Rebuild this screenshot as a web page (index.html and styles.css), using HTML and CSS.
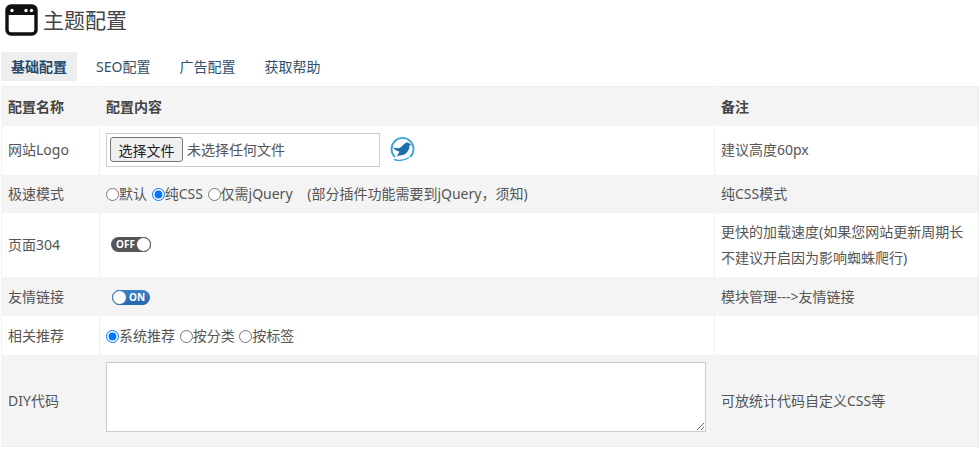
FILE: index.html
```html
<!DOCTYPE html>
<html lang="zh-CN">
  <head>
    <meta charset="utf-8">
    <title>主题配置</title>
    <link rel="stylesheet" href="styles.css">
  </head>
  <body>
    <div class="page-title">
      <svg class="title-icon" viewBox="0 0 33 32" width="33" height="32">
        <rect x="2" y="2" width="29" height="28" rx="4" fill="#fff" stroke="#111" stroke-width="3.4"/>
        <path d="M2 11V6a4 4 0 0 1 4-4h21a4 4 0 0 1 4 4v5z" fill="#111"/>
        <circle cx="7" cy="6.5" r="1.7" fill="#fff"/>
        <circle cx="21" cy="6.5" r="1.7" fill="#fff"/>
        <circle cx="26.5" cy="6.5" r="1.7" fill="#fff"/>
      </svg>
      <h1>主题配置</h1>
    </div>

    <ul class="tabs">
      <li class="active">基础配置</li>
      <li>SEO配置</li>
      <li>广告配置</li>
      <li>获取帮助</li>
    </ul>

    <table class="config">
      <tr class="row-head">
        <th class="col-name">配置名称</th>
        <th class="col-value">配置内容</th>
        <th>备注</th>
      </tr>
      <tr class="row-logo">
        <td>网站Logo</td>
        <td>
          <div class="logo-field">
            <div class="file-box">
              <button type="button" class="file-btn">选择文件</button>
              <span>未选择任何文件</span>
            </div>
            <svg class="logo-bird" viewBox="0 0 26 26" width="26" height="26">
              <path d="M6 21A11 11 0 1 1 21 21" fill="none" stroke="#3aa3d6" stroke-width="1.800"/>
              <path d="M5 23.500c4 1.500 10 1.300 15-2" fill="none" stroke="#3aa3d6" stroke-width="1.400"/>
              <path d="M4 11.500c3 .5 5 1 7 .3 2-1 3.500-3.800 6-5 1.500-.7 3-.2 3.500 1l2.200 1-2.200 .8c0 4.500-2.500 8-6 9.200-2.500.8-4.500.4-6.500 1.700.5-2 2-3.500 2.300-5C7.500 15 5.500 13.500 4 11.500z" fill="#1c6fa8"/>
            </svg>
          </div>
        </td>
        <td>建议高度60px</td>
      </tr>
      <tr class="row-speed">
        <td>极速模式</td>
        <td>
          <label class="radio"><input type="radio" name="speed">默认</label>
          <label class="radio"><input type="radio" name="speed" checked>纯CSS</label>
          <label class="radio"><input type="radio" name="speed">仅需jQuery</label>
          <span class="hint">(部分插件功能需要到jQuery，须知)</span>
        </td>
        <td>纯CSS模式</td>
      </tr>
      <tr class="row-304">
        <td>页面304</td>
        <td><span class="switch off"><span class="switch-label">OFF</span><span class="knob"></span></span></td>
        <td class="note-long">更快的加载速度(如果您网站更新周期长不建议开启因为影响蜘蛛爬行)</td>
      </tr>
      <tr class="row-link">
        <td>友情链接</td>
        <td><span class="switch on"><span class="knob"></span><span class="switch-label">ON</span></span></td>
        <td>模块管理---&gt;友情链接</td>
      </tr>
      <tr class="row-related">
        <td>相关推荐</td>
        <td>
          <label class="radio"><input type="radio" name="related" checked>系统推荐</label>
          <label class="radio"><input type="radio" name="related">按分类</label>
          <label class="radio"><input type="radio" name="related">按标签</label>
        </td>
        <td></td>
      </tr>
      <tr class="row-diy">
        <td>DIY代码</td>
        <td><textarea class="diy-code"></textarea></td>
        <td>可放统计代码自定义CSS等</td>
      </tr>
    </table>
  </body>
</html>
```

FILE: styles.css
```css
body{
  margin:0;
  background-color:#fff;
  color:#555;
  font-family:"Noto Sans","Noto Sans CJK SC",sans-serif;
  font-size:14px;
}
.page-title{
  display:flex;
  align-items:center;
  height:40px;
  padding:0 0 0 5px;
}
.title-icon{
  display:block;
  margin-right:5px;
}
.page-title h1{
  margin:0 0 2px 0;
  font-size:21px;
  font-weight:normal;
  color:#444;
}
.tabs{
  display:flex;
  gap:9px;
  list-style:none;
  margin:12px 0 0 1px;
  padding:0;
  color:#33506b;
}
.tabs li{
  padding:0 10px;
  height:29px;
  line-height:29px;
}
.tabs .active{
  background-color:#eee;
  font-weight:bold;
  color:#25496e;
}
.config{
  border-collapse:collapse;
  table-layout:fixed;
  width:978px;
  margin:5px 0 0 1px;
  border:1px solid #eee;
  line-height:20px;
}
.config th,
.config td{
  padding:0 7px 0 6px;
  text-align:left;
  border-left:1px solid #f0f0f0;
}
.col-name{
  width:84px;
}
.col-value{
  width:601px;
}
.config tr:nth-child(odd){
  background-color:#f4f4f4;
}
.config tr:nth-child(odd) td,
.config tr:nth-child(odd) th{
  border-left-color:#f4f4f4;
}
.row-head{
  height:39px;
}
.config .row-head th{
  padding-top:1px;
  color:#444;
}
.row-logo{
  height:49px;
}
.row-speed{
  height:38px;
}
.row-304{
  height:64px;
}
.row-link{
  height:39px;
}
.row-related{
  height:39px;
}
.row-diy{
  height:92px;
}
.config .row-link td,
.config .row-related td,
.config .row-diy td{
  padding-top:1px;
}
.config .row-diy td{
  padding-top:2px;
}
.config .note-long{
  line-height:26px;
}
.logo-field{
  display:flex;
  align-items:center;
  gap:9px;
}
.file-box{
  display:flex;
  align-items:center;
  box-sizing:border-box;
  width:274px;
  height:34px;
  margin-top:-1px;
  padding-left:3px;
  border:1px solid #ccc;
  background-color:#fff;
}
.file-btn{
  width:73px;
  height:25px;
  margin-right:4px;
  padding:0;
  border:1px solid #767676;
  border-radius:3px;
  background-color:#efefef;
  color:#222;
  font-family:inherit;
  font-size:14px;
}
.logo-bird{
  display:block;
  margin-top:-2px;
}
.radio{
  margin-right:1px;
}
.radio input{
  width:13px;
  height:13px;
  margin:0 0 1px 0;
  vertical-align:middle;
}
.hint{
  margin-left:10px;
}
.switch{
  display:inline-flex;
  align-items:center;
  box-sizing:border-box;
  height:15px;
  border-radius:8px;
  vertical-align:middle;
  color:#fff;
  font-size:10px;
  font-weight:bold;
  line-height:15px;
}
.switch.off{
  width:40px;
  margin:0 0 2px 5px;
  padding-left:5px;
  justify-content:space-between;
  background-color:#555;
}
.switch.on{
  width:38px;
  margin-left:6px;
  gap:2px;
  background:linear-gradient(#3b82c8,#2566ad);
}
.knob{
  box-sizing:border-box;
  width:15px;
  height:15px;
  border-radius:50%;
  background-color:#fff;
  border:1.500px solid #555;
}
.switch.on .knob{
  border-color:#2b70b8;
}
.diy-code{
  display:block;
  box-sizing:border-box;
  width:600px;
  height:70px;
  margin:0 0 8px 0;
  border:1px solid #ccc;
  background-color:#fff;
}
```
